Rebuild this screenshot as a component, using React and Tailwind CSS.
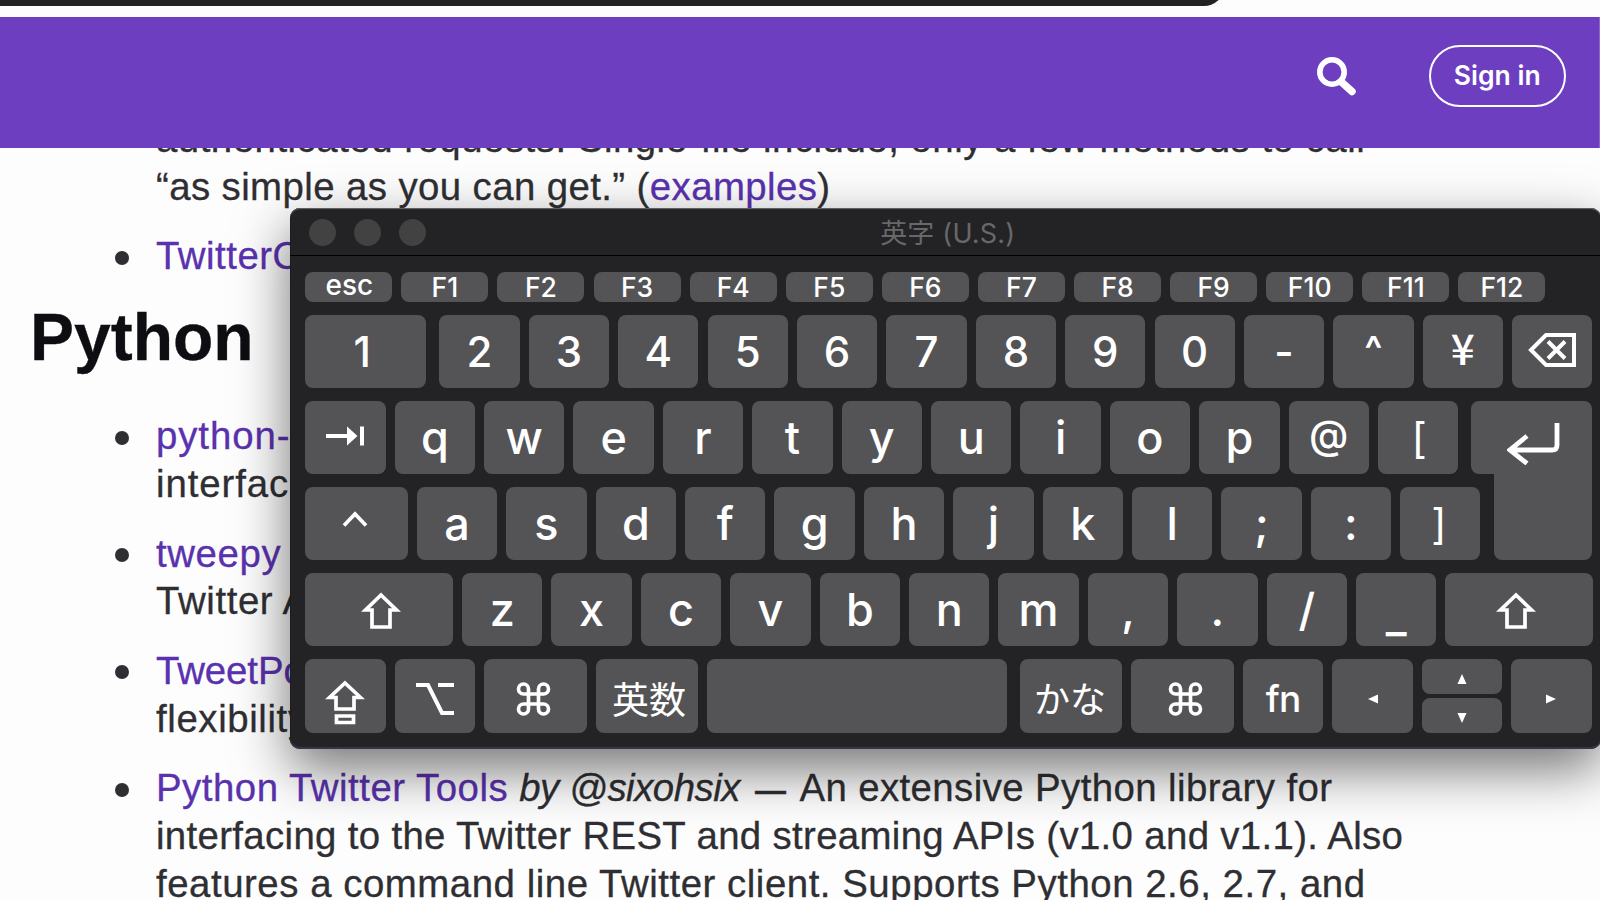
import React from "react";

const Svg = ({ w, h, sw = 3.7, className = "", children }) => (
  <svg width={w} height={h} viewBox={`0 0 ${w} ${h}`} fill="none" stroke="currentColor" strokeWidth={sw} className={`shrink-0 ${className}`}>
    {children}
  </svg>
);

const Backspace = () => (
  <Svg w={48} h={34} sw={4} className="mb-[2px]"><path d="M3 17 18 2H46V32H18ZM20 8.500 37 25.500M37 8.500 20 25.500" /></Svg>
);
const Tab = () => (
  <Svg w={38} h={20} sw={4} className="mb-[2px]"><path d="M0 10H24M36 .5v19" /><path d="M21 .5 31.500 10 21 19.500Z" fill="currentColor" stroke="none" /></Svg>
);
const Return = () => (
  <Svg w={54} h={42} sw={4.8} className="ml-[5px] mt-[13px]"><path d="M50 0V22Q50 27 45 27H3M20 13 3 27l17 13.5" /></Svg>
);
const Control = () => (
  <Svg w={26} h={18} className="mb-[10px] mr-[3px]"><path d="M2 15.500 13 4 24 15.500" /></Svg>
);
const Shift = ({ className }) => (
  <Svg w={40} h={38} className={`mt-[3px] ${className}`}><path d="M20 3 35.500 18H29V35H11V18H4.500Z" /></Svg>
);
const CapsLock = () => (
  <Svg w={40} h={46} className="mt-[13px]"><path d="M20 3 35.500 17.500H29V29H11V17.500H4.500ZM11.500 36H28.500V42.500H11.500Z" /></Svg>
);
const Option = () => (
  <Svg w={38} h={34} sw={4} className="mt-[5px]"><path d="M0 3H12L26 31H38M22 3H38" /></Svg>
);
const Command = ({ className }) => (
  <svg width="41" height="40" viewBox="0 0 24 24" fill="none" stroke="currentColor" strokeWidth="2.2" className={`mt-[6px] ${className}`}>
    <path d="M15 6v12a3 3 0 1 0 3-3H6a3 3 0 1 0 3 3V6a3 3 0 1 0-3 3h12a3 3 0 1 0-3-3" />
  </svg>
);
const Triangle = ({ className }) => (
  <svg width="10" height="10" viewBox="0 0 10 10" fill="currentColor" className={className}><path d="M5 0 9.500 10H.5Z" /></svg>
);

const Key = ({ children, className = "w-[80.300px]" }) => (
  <div className={`flex h-full shrink-0 items-center justify-center rounded-[8px] bg-[#545456] ${className}`}>{children}</div>
);
const Letters = ({ chars }) => [...chars].map((c) => <Key key={c}><span>{c}</span></Key>);

function Keyboard() {
  return (
    <div className="absolute left-[290px] top-[208px] flex h-[541px] w-[1311px] flex-col rounded-[10px] bg-[#232325] font-['Inter','Noto_Sans_CJK_JP',sans-serif] text-white shadow-[0_20px_54px_rgba(0,0,0,0.55),inset_0_1px_1px_#66666a,inset_0_-2px_1px_#37374a,inset_1px_0_0_#111]">
      <div className="grid h-[48px] shrink-0 grid-cols-[1fr_auto_1fr] items-center border-b border-black pl-[18.500px]">
        <div className="flex gap-[18px] pt-[2px]">
          <i className="size-[27px] rounded-full bg-[#424242]" />
          <i className="size-[27px] rounded-full bg-[#424242]" />
          <i className="size-[27px] rounded-full bg-[#424242]" />
        </div>
        <div className="pr-[14px] pt-[5px] text-[27px] leading-[40px] tracking-[0.2px] text-[#68686a]">英字 (U.S.)</div>
      </div>
      <div className="flex flex-col gap-[13px] pl-[15.300px] pt-[15.700px] text-[45px] font-medium leading-[73px]">
        <div className="flex h-[30px] gap-[9.100px] text-[26.500px] leading-[30px]">
          <Key className="w-[87px] text-[28px]"><span className="pb-[4px] pl-[1px]">esc</span></Key>
          {["F1", "F2", "F3", "F4", "F5", "F6", "F7", "F8", "F9", "F10", "F11", "F12"].map((f) => (
            <Key key={f} className="w-[87px]"><span className="pt-[1px]">{f}</span></Key>
          ))}
        </div>
        <div className="flex h-[73.200px] gap-[9.100px] text-[42px]">
          <Key className="mr-[4px] w-[121px]"><span className="mr-[7px]">1</span></Key>
          <Letters chars="234567890-" />
          <Key><span className="pb-[4px] text-[38px] font-semibold">^</span></Key>
          <Key><span className="pb-[9px] font-['Noto_Sans_CJK_JP'] text-[42px]">¥</span></Key>
          <Key><Backspace /></Key>
        </div>
        <div className="flex h-[73.200px] gap-[9.100px]">
          <Key><Tab /></Key>
          <Letters chars="qwertyuiop" />
          <Key><span className="pb-[5px] text-[40px]">@</span></Key>
          <Key><span className="pl-[2px] text-[42px] font-normal">[</span></Key>
          <div className="ml-[4px] flex h-[159.400px] w-[121px] shrink-0 flex-col items-end">
            <div className="flex h-[73.200px] w-full shrink-0 items-center justify-center rounded-l-[8px] rounded-tr-[8px] bg-[#545456]">
              <Return />
            </div>
            <div className="h-[86.200px] w-[98px] shrink-0 rounded-b-[8px] bg-[#545456]" />
          </div>
        </div>
        <div className="flex h-[73.200px] gap-[9.100px]">
          <Key className="w-[102.500px]"><Control /></Key>
          <Letters chars="asdfghjkl;:" />
          <Key><span className="pr-[3px] text-[42px] font-normal">]</span></Key>
        </div>
        <div className="flex h-[73.200px] gap-[9.100px]">
          <Key className="w-[147.700px]"><Shift className="ml-[4px]" /></Key>
          <Letters chars="zxcvbnm,./" />
          <Key><span className="pt-[12px]">_</span></Key>
          <Key className="w-[147.200px]"><Shift className="mr-[5px]" /></Key>
        </div>
        <div className="flex h-[73.200px] gap-[9.100px]">
          <Key><CapsLock /></Key>
          <Key><Option /></Key>
          <Key className="w-[102.500px]"><Command className="mr-[4px]" /></Key>
          <Key className="w-[102.500px] text-[37px]"><span className="pl-[4px] pt-[8px] font-normal">英数</span></Key>
          <Key className="mr-[4px] w-[299.500px]" />
          <Key className="w-[102.500px] text-[36px]"><span className="pr-[2px] pt-[8px] font-normal">かな</span></Key>
          <Key className="w-[102.500px]"><Command className="ml-[5px]" /></Key>
          <Key className="w-[80.300px] text-[37px]"><span className="pt-[5px] tracking-[-0.8px]">fn</span></Key>
          <Key><Triangle className="mt-[6px] -rotate-90" /></Key>
          <div className="flex w-[80.300px] shrink-0 flex-col gap-[4.200px]">
            <div className="h-[34.500px]"><Key className="w-full"><Triangle className="mt-[5px]" /></Key></div>
            <div className="h-[34.500px]"><Key className="w-full"><Triangle className="mt-[6px] rotate-180" /></Key></div>
          </div>
          <Key><Triangle className="mt-[6px] rotate-90" /></Key>
        </div>
      </div>
    </div>
  );
}

const Item = ({ children }) => (
  <li className="relative mb-[21.700px]">
    <span className="absolute -left-[41.500px] top-[18.500px] size-[14px] rounded-full bg-[#2f2f33]" />
    {children}
  </li>
);
const Line = ({ className = "", children }) => <div className={`h-[47.800px] whitespace-nowrap ${className}`}>{children}</div>;
const Link = ({ className = "", children }) => <a className={`text-[#5a31ae] ${className}`}>{children}</a>;

export default function App() {
  return (
    <div className="relative flex h-[900px] w-[1600px] flex-col overflow-hidden bg-[#fdfdfd] font-['Liberation_Sans',Arial,sans-serif]">
      <div className="h-[6px] w-[1224px] shrink-0 overflow-hidden">
        <div className="-mt-[30px] h-[36px] rounded-br-[20px] bg-[#222225]" />
      </div>
      <header className="mt-[10.500px] flex h-[131.500px] shrink-0 items-start justify-end border-r border-[#8a68d0] bg-[#6d3fc0] pr-[33px] pt-[28.500px] text-white">
        <svg width="44" height="44" viewBox="0 0 44 44" fill="none" stroke="currentColor" className="mr-[71px] mt-[8px]">
          <circle cx="18" cy="19" r="12.200" strokeWidth="5.600" />
          <path d="M28 29.500 38 38.500" strokeWidth="7.500" strokeLinecap="round" />
        </svg>
        <button className="h-[61.500px] w-[137.500px] rounded-full border-2 border-white font-['Inter',sans-serif] text-[26.500px] font-semibold leading-[57px]">Sign in</button>
      </header>
      <main className="min-h-0 flex-1 overflow-hidden">
        <div className="-mt-[33px] text-[38.400px] leading-[47.800px] text-[#2f2f33] [-webkit-text-stroke:0.3px_currentColor]">
          <ul className="pl-[156px] tracking-[0.5px]">
            <Item>
              <Line>authenticated requests. Single-file include, only a few methods to call</Line>
              <Line className="tracking-[0.400px]">“as simple as you can get.” (<Link>examples</Link>)</Line>
            </Item>
            <Item><Line><Link>TwitterO</Link></Line></Item>
          </ul>
          <h2 className="ml-[30px] mt-[3px] text-[66px] font-bold leading-[70px] text-[#0e0e12]">Python</h2>
          <ul className="mt-[40.500px] pl-[156px] tracking-[0.600px]">
            <Item><Line className="tracking-[0.900px]"><Link>python-</Link></Line><Line className="tracking-[0.900px]">interface</Line></Item>
            <Item><Line><Link>tweepy</Link></Line><Line>Twitter A</Line></Item>
            <Item><Line><Link className="tracking-[-0.100px]">TweetPo</Link></Line><Line>flexibility</Line></Item>
            <Item>
              <Line className="tracking-[0.400px]">
                <Link className="tracking-[0.500px]">Python Twitter Tools</Link> <em className="tracking-[-0.500px]">by @sixohsix</em> <span className="mx-[4px] text-[31px] font-bold leading-[0]">—</span> An extensive Python library for
              </Line>
              <Line className="tracking-[0.330px]">interfacing to the Twitter REST and streaming APIs (v1.0 and v1.1). Also</Line>
              <Line className="tracking-[0.530px]">features a command line Twitter client. Supports Python 2.6, 2.7, and</Line>
            </Item>
          </ul>
        </div>
      </main>
      <Keyboard />
    </div>
  );
}
